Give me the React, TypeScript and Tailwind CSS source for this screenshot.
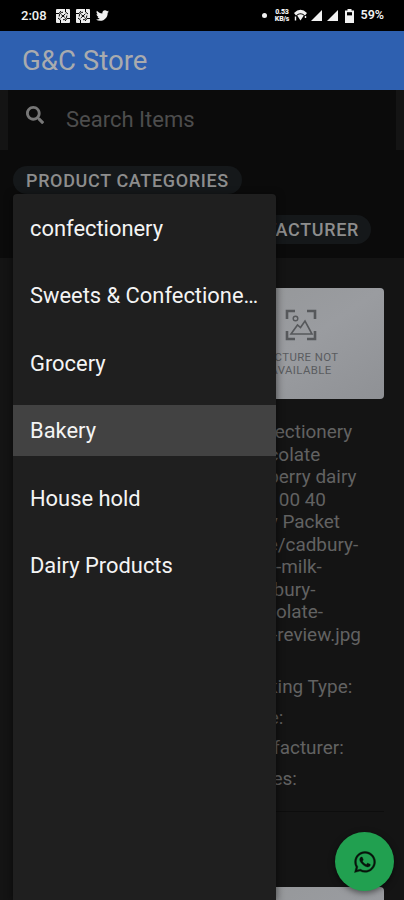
import { FaSearch, FaTwitter, FaWhatsapp } from "react-icons/fa";
import clsx from "clsx";

const categories = [
  "confectionery",
  "Sweets & Confectionery Items",
  "Grocery",
  "Bakery",
  "House hold",
  "Dairy Products",
];

const description = [
  "Confectionery",
  "Chocolate",
  "Cadberry dairy",
  "silk 100 40",
  "Dairy Packet",
  "store/cadbury-",
  "dairy-milk-",
  "/cadbury-",
  "chocolate-",
  "bars-review.jpg",
];

const details = ["Packing Type:", "Price:", "Manfacturer:", "Pieces:"];

function AppBadge() {
  return (
    <svg viewBox="0 0 14 14" className="size-[14px]">
      <rect width="14" height="14" rx="1" fill="#ececec" />
      <g fill="none" stroke="#000" strokeWidth="1">
        <path d="M3.2 7.5A4 4 0 0 1 7 3.2M10.8 6.5A4 4 0 0 1 7 10.8" />
        <path d="M4.6 9.2 9.4 4.8M5.2 5.6 8.8 8.4" />
        <path d="M0 4.5h3L5 2M9.5 0v3L12 5M14 9.5h-3L9 12M4.5 14v-3L2 9" />
      </g>
    </svg>
  );
}

function Signal() {
  return (
    <svg viewBox="0 0 12 12" className="size-[11px]">
      <path d="M12 0V12H0Z" fill="#f1f1f1" />
    </svg>
  );
}

function StatusBar() {
  return (
    <div className="flex h-[31px] items-center bg-black pl-[21px] pr-5 text-[#f1f1f1]">
      <span className="w-[35px] text-[13px] font-medium leading-none">2:08</span>
      <AppBadge />
      <span className="w-1.5" />
      <AppBadge />
      <FaTwitter className="ml-[6px] size-[13px]" />
      <span className="ml-auto size-[5px] rounded-full bg-[#f1f1f1]" />
      <span className="ml-[7px] flex w-[15px] flex-col items-center text-[7px] font-black leading-[7px] tracking-[-0.2px]">
        <span>0.53</span>
        <span>KB/s</span>
      </span>
      <svg viewBox="0 0 13 13" className="ml-[5px] size-[13px]">
        <path d="M0 4Q6.5-2.5 13 4L11 6.4Q6.5 2 2 6.4Z" fill="#f1f1f1" />
        <path d="M3.2 6.5Q6.5 4 9.8 6.5L6.5 11.5Z" fill="#f1f1f1" />
        <path d="M1.5 7.5v4M11.5 7v2" stroke="#f1f1f1" strokeWidth="1.4" />
      </svg>
      <span className="ml-[4px] flex gap-[5px]">
        <Signal />
        <Signal />
      </span>
      <svg viewBox="0 0 9 14" className="ml-[7px] h-[14px] w-[9px]">
        <path d="M2.5 0h4v1.5H9V14H0V1.5h2.5Z" fill="#f1f1f1" />
        <path d="M2 3.2h5V6.4H2Z" fill="#000" />
      </svg>
      <span className="ml-[6px] text-[12.5px] font-semibold leading-none">59%</span>
    </div>
  );
}

function PlaceholderImage({ caption = true }: { caption?: boolean }) {
  return (
    <div className="flex h-[111px] w-[166px] flex-col items-center rounded bg-linear-to-br from-[#949698] via-[#9a9ca0] to-[#8f9195] pt-[21px]">
      {caption && (
        <>
          <svg viewBox="0 0 32 32" className="size-8" fill="none" stroke="#56585b">
            <path
              d="M2 10V2h8M22 2h8v8M30 22v8h-8M10 30H2v-8"
              strokeWidth="2.6"
            />
            <path d="M6 25 12.5 16l3 2.5L20 12l7 13Z" strokeWidth="1.6" />
            <circle cx="10.5" cy="9.5" r="2.3" strokeWidth="1.4" />
          </svg>
          <p className="mt-[10px] text-center text-[11.4px] leading-[13px] tracking-[0.4px] text-[#5a5c5f]">
            PICTURE NOT
            <br />
            AVAILABLE
          </p>
        </>
      )}
    </div>
  );
}

function ProductCard() {
  return (
    <div className="w-[166px] whitespace-nowrap text-[18.9px] text-[#626262]">
      <PlaceholderImage />
      <div className="mt-[22px] pl-[17px] leading-[22.5px]">
        {description.map((line) => (
          <p key={line}>{line}</p>
        ))}
      </div>
      <div className="mt-[26px] pl-[18px] leading-[30.7px]">
        {details.map((label) => (
          <p key={label}>{label}</p>
        ))}
      </div>
      <div className="mt-4 h-px bg-[#0d0d0d]" />
    </div>
  );
}

function CategoryMenu() {
  return (
    <ul className="absolute left-[13px] top-[194px] h-[706px] w-[263px] rounded-t bg-[#1f1f1f] pt-[9px] shadow-[0_2px_8px_rgba(0,0,0,0.6)]">
      {categories.map((category) => (
        <li
          key={category}
          className={clsx(
            "mb-[16.4px] h-[51px] truncate pl-[17px] pr-[15px] text-[21.9px] leading-[51px] text-[#f4f4f4]",
            category === "Bakery" && "bg-[#424242]"
          )}
        >
          {category}
        </li>
      ))}
    </ul>
  );
}

export default function App() {
  return (
    <div className="relative h-[900px] w-[404px] overflow-hidden bg-[#141414] font-[Roboto,sans-serif]">
      <StatusBar />
      <header className="flex h-[59px] items-center bg-[#2e60b0] pl-[22px] text-[27.6px] text-[#a9abae]">
        G&amp;C Store
      </header>

      <div className="px-2">
        <div className="flex h-[60px] items-center bg-[#0b0b0b] pl-[18px]">
          <FaSearch className="mb-[10px] size-[18px] text-[#777]" />
          <span className="mb-[2px] ml-[22px] text-[22px] text-[#4d4d4d]">
            Search Items
          </span>
        </div>
      </div>

      <div className="flex h-[108px] flex-col bg-[#0b0b0b] pl-[13px] pr-[33px] pt-4 text-[18px] font-medium tracking-[0.65px] text-[#8d8d8d]">
        <span className="flex h-7 w-[229px] items-center whitespace-nowrap rounded-full bg-[#15181a] pl-[13px]">
          PRODUCT CATEGORIES
        </span>
        <span className="mt-[21px] flex h-[29px] w-[190px] items-center justify-end self-end rounded-full bg-[#15181a] pr-3">
          MANUFACTURER
        </span>
      </div>

      <div className="flex flex-col gap-[75px] pl-[218px] pt-[30px]">
        <ProductCard />
        <PlaceholderImage caption={false} />
      </div>

      <CategoryMenu />

      <button className="absolute left-[335px] top-[832px] flex size-[59px] items-center justify-center rounded-full bg-[#21a050] text-[#07130b] shadow-[0_2px_6px_rgba(0,0,0,0.5)]">
        <FaWhatsapp className="size-6" stroke="currentColor" strokeWidth={8} />
      </button>
    </div>
  );
}
